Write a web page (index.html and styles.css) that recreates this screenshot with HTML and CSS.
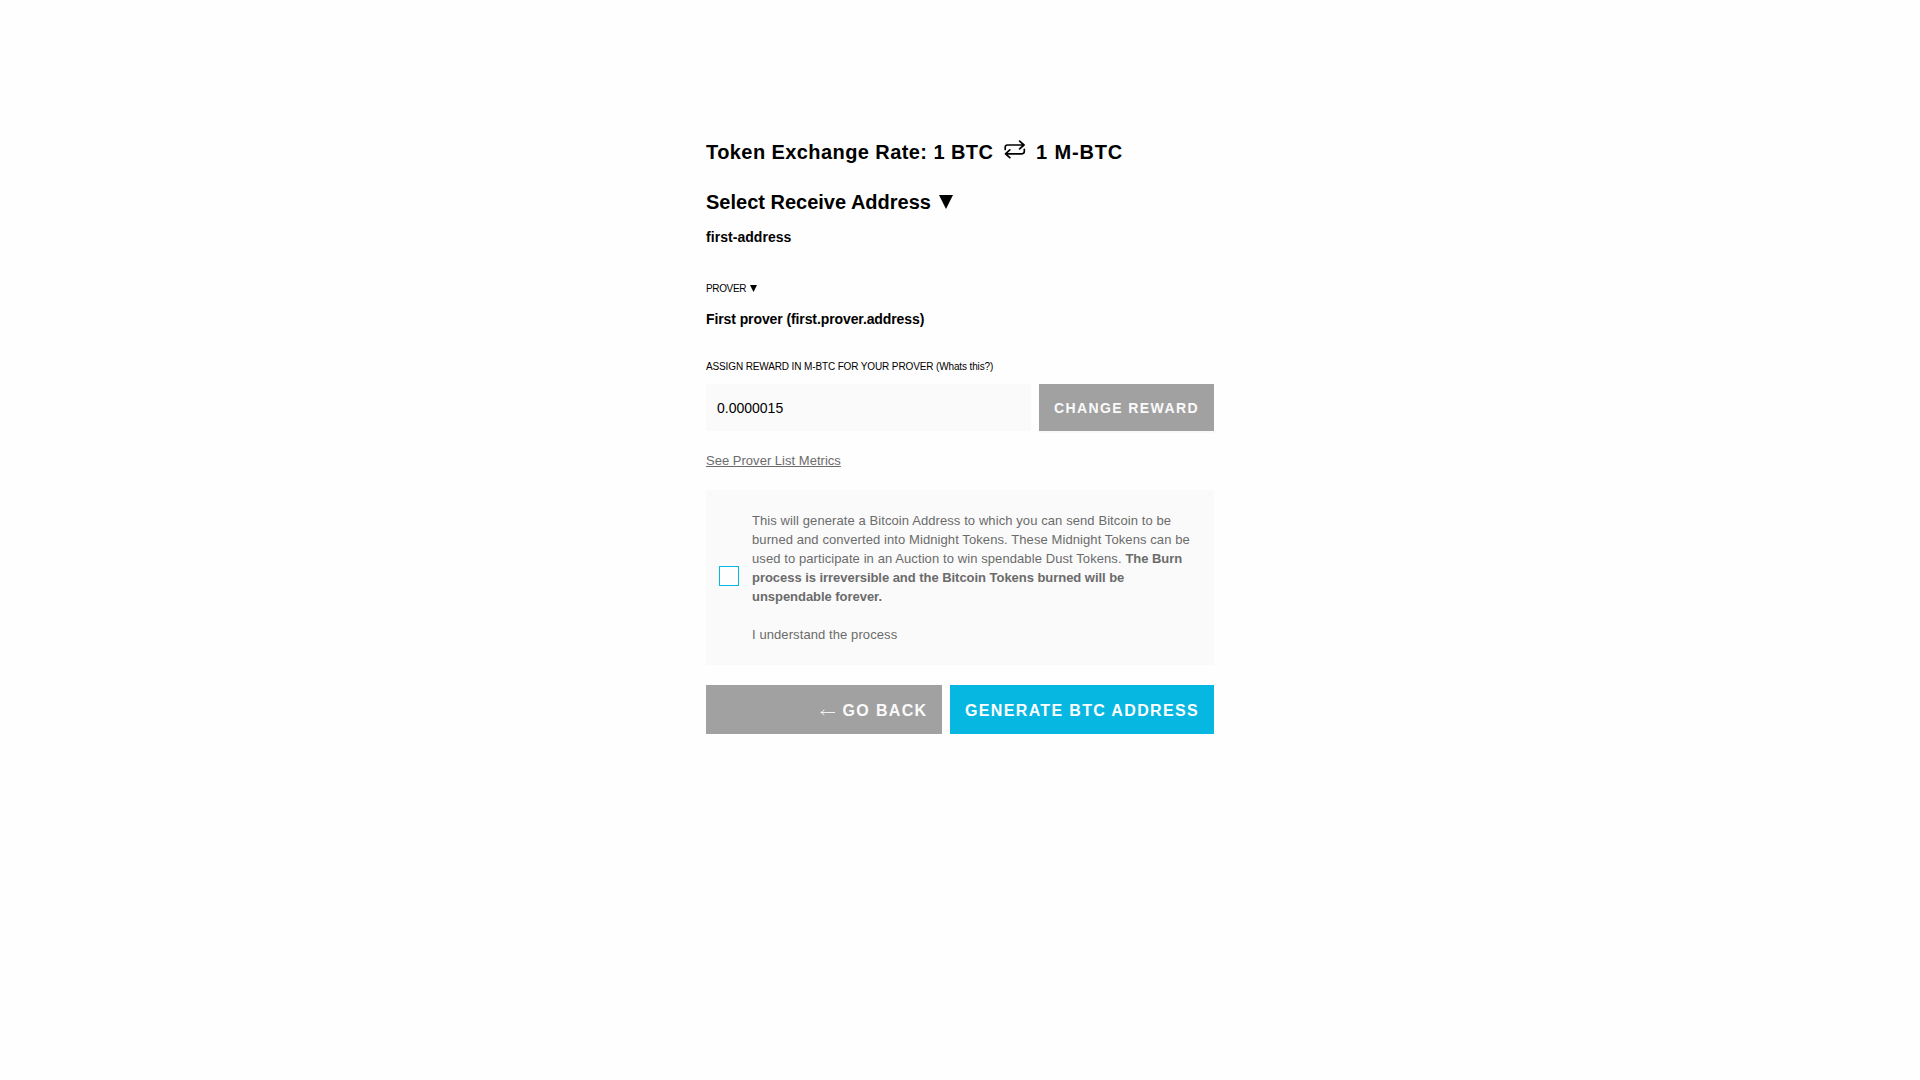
FILE: index.html
```
<!DOCTYPE html>
<html lang="en">
<head>
<meta charset="utf-8">
<title>Generate BTC Address</title>
<link rel="stylesheet" href="styles.css">
</head>
<body>
<main class="burn">
  <h1 class="rate">
    <span class="rate-from">Token Exchange Rate: 1 BTC</span>
    <svg class="rate-icon" width="22" height="20" viewBox="0 0 22 20" aria-hidden="true"><path d="M1.2 9.5V7.2Q1.2 5 3.6 5H20M15.6 1.1L20 5L15.6 8.9M20.3 9.3V11.6Q20.3 13.8 17.9 13.8H1.5M5.8 9.9L1.5 13.8L5.8 17.7"/></svg>
    <span class="rate-to">1 M-BTC</span>
  </h1>
  <h2 class="heading">Select Receive Address<svg class="heading-arrow" width="14" height="14" viewBox="0 0 14 14"><path d="M0 0H14L7 14Z"/></svg></h2>
  <div class="value address">first-address</div>
  <div class="label prover-label">PROVER<svg class="label-arrow" width="7" height="7" viewBox="0 0 7 7"><path d="M0 0H7L3.5 7Z"/></svg></div>
  <div class="value prover">First prover (first.prover.address)</div>
  <label class="label reward-label" for="reward">ASSIGN REWARD IN M-BTC FOR YOUR PROVER (Whats this?)</label>
  <div class="reward">
    <input class="reward-input" id="reward" type="text" value="0.0000015">
    <button class="button button-small" type="button">CHANGE REWARD</button>
  </div>
  <a class="metrics-link" href="#">See Prover List Metrics</a>
  <label class="terms">
    <input class="terms-check" type="checkbox">
    <span class="terms-text">This will generate a Bitcoin Address to which you can send Bitcoin to be burned and converted into Midnight Tokens. These Midnight Tokens can be used to participate in an Auction to win spendable Dust Tokens. <b class="terms-strong">The Burn process is irreversible and the Bitcoin Tokens burned will be unspendable forever.</b><br><br>I understand the process</span>
  </label>
  <div class="actions">
    <button class="button button-back" type="button"><svg class="back-arrow" width="15" height="7" viewBox="0 0 15 7"><path d="M15 3.5H1M4.2 .7Q3 3 .8 3.5Q3 4 4.2 6.3"/></svg>GO BACK</button>
    <button class="button button-primary" type="button">GENERATE BTC ADDRESS</button>
  </div>
</main>
</body>
</html>
```
FILE: styles.css
```
* { box-sizing: border-box; }

body {
  margin: 0;
  background: #fefefe;
  color: #000;
  font-family: "Liberation Sans", Arial, Helvetica, sans-serif;
}

.burn {
  width: 508px;
  margin: 0 auto;
  padding-top: 140px;
}

.rate, .heading {
  display: flex;
  margin: 0;
  font-size: 20px;
  line-height: 24px;
  font-weight: bold;
  white-space: nowrap;
}

.rate-from { letter-spacing: .42px; width: 298px; }
.rate-to { letter-spacing: .85px; }
.rate-icon {
  width: 22px;
  margin: 0 10px 0 0;
  fill: none;
  stroke: #000;
  stroke-width: 1.7;
  stroke-linecap: round;
  stroke-linejoin: round;
}

.heading { margin-top: 26px; }
.heading-arrow { margin: 5px 0 0 8.5px; }

.value {
  font-size: 14px;
  line-height: 20px;
  font-weight: bold;
}
.address { margin-top: 13px; letter-spacing: .05px; }
.prover { margin-top: 14px; letter-spacing: -.1px; }

.label {
  display: flex;
  font-size: 10px;
  line-height: 12px;
  letter-spacing: -.13px;
}
.prover-label { margin-top: 36px; letter-spacing: -.35px; }
.label-arrow { margin: 2px 0 0 4px; }
.reward-label { margin-top: 32px; }

.reward { display: flex; gap: 8px; margin-top: 11px; }

.reward-input {
  flex: 1;
  min-width: 0;
  height: 47px;
  padding: 0 11px;
  border: 0;
  background: #fafafa;
  color: #000;
  font: 14px "Liberation Sans", Arial, sans-serif;
}

.button {
  border: 0;
  padding: 0;
  background: #a1a1a1;
  color: #fafafa;
  font-family: inherit;
  font-weight: bold;
  white-space: nowrap;
  box-shadow: 0 2px 0 #f9f9f9;
}
.button-small { width: 175px; font-size: 14px; letter-spacing: 1.4px; }

.metrics-link {
  display: block;
  width: fit-content;
  margin-top: 20px;
  color: #6b6b6b;
  font-size: 13px;
  line-height: 19px;
  letter-spacing: .02px;
  text-underline-offset: 1px;
}

.terms {
  display: flex;
  align-items: center;
  margin-top: 20px;
  padding: 21px 13px;
  background: #fafafa;
}
.terms-check {
  appearance: none;
  flex: none;
  width: 20px;
  height: 20px;
  margin: 0 13px 3px 0;
  border: 1px solid #05b7e1;
  background: #fefefe;
}
.terms-text {
  width: 449px;
  color: #6b6b6b;
  font-size: 13px;
  line-height: 19px;
  letter-spacing: .09px;
}
.terms-strong { letter-spacing: -.04px; }

.actions { display: flex; gap: 8px; margin-top: 20px; }
.actions .button {
  height: 49px;
  padding-top: 2px;
  font-size: 16px;
  letter-spacing: 1.34px;
  box-shadow: 0 2px 0 #f6f6f6;
}
.actions .button-back {
  display: flex;
  align-items: center;
  justify-content: flex-end;
  width: 236px;
  padding-right: 14.5px;
}
.actions .button-primary { flex: 1; background: #05b7e1; color: #fefefe; }
.back-arrow { margin: 3px 7.5px 0 0; fill: none; stroke: #fafafa; stroke-width: .9; }
```
